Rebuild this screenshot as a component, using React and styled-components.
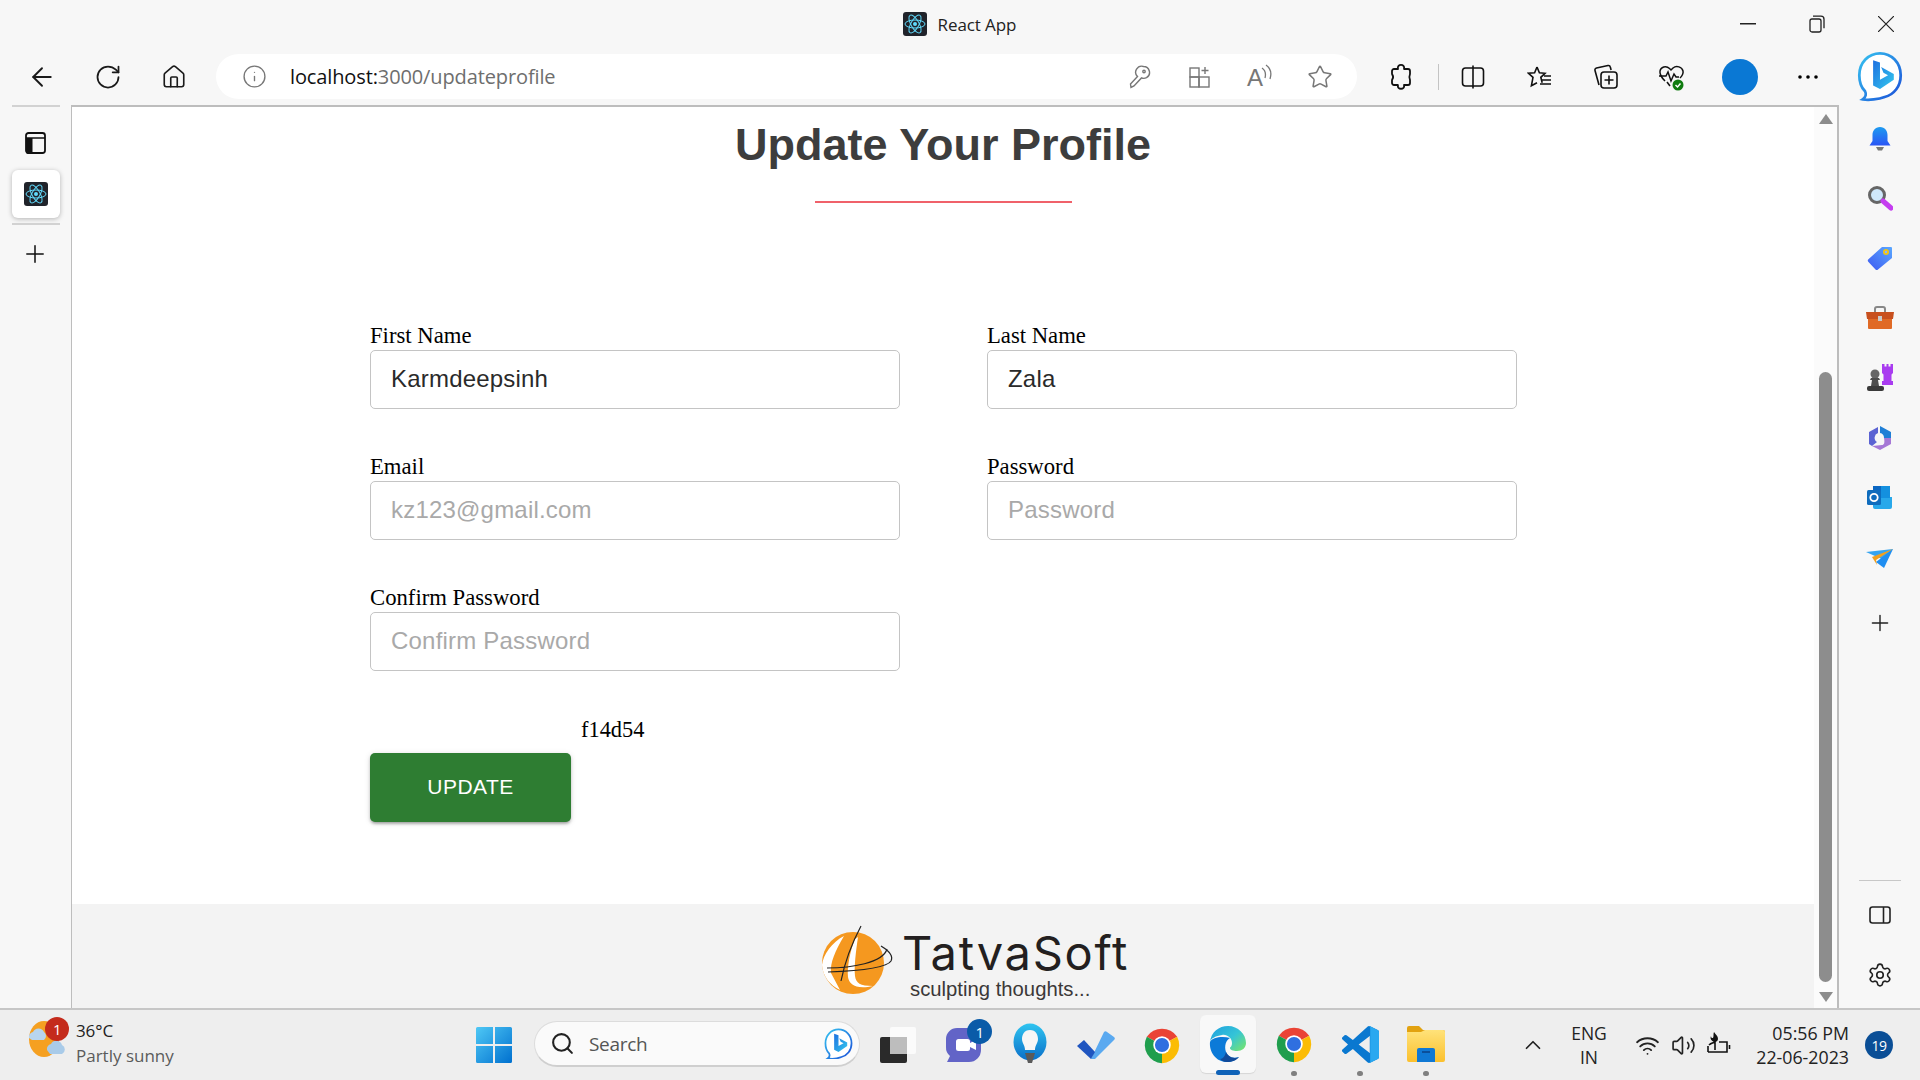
import React from "react";
import styled, { createGlobalStyle } from "styled-components";
import { ArrowLeft, RotateCw, Home, Info, Star, Plus, Settings, Search, ChevronUp, Wifi, Volume2 } from "lucide-react";

const Global = createGlobalStyle`
  html, body { margin: 0; padding: 0; width: 100%; height: 100%; overflow: hidden; }
  #root { width: 100%; height: 100%; }
  * { box-sizing: border-box; }
`;

const ui = `"Open Sans", "Noto Sans", sans-serif`;

const Shell = styled.div`
  width: 1920px; height: 1080px; display: flex; flex-direction: column;
  background: #f7f7f7; font-family: ${ui}; color: #111;
`;
const TitleBar = styled.header`
  height: 48px; flex: none; position: relative; display: flex; align-items: center; justify-content: center;
`;
const TitleCenter = styled.div`
  display: flex; align-items: center; gap: 11px; margin-left: -1px; font-size: 17px; color: #222; letter-spacing: -0.1px;
`;
const WindowControls = styled.div`
  position: absolute; right: 0; top: 0; height: 48px; display: flex; align-items: center;
`;
const WinBtn = styled.div`
  width: 69px; display: flex; justify-content: center; color: #222;
`;
const Toolbar = styled.div`
  height: 57px; flex: none; display: flex; align-items: center;
`;
const ToolBtn = styled.div`
  width: ${p => p.$w || 66}px; padding-left: ${p => p.$pad || 0}px; height: 46px; flex: none; display: flex; align-items: center; justify-content: center; color: #1a1a1a;
`;
const AddressBar = styled.div`
  width: 1141px; height: 45px; flex: none; margin-left: 9px; background: #fff; border-radius: 23px;
  display: flex; align-items: center; padding-left: 26px; color: #777;
`;
const Url = styled.div`
  margin-left: 23px; flex: 1; font-size: 20px; letter-spacing: -0.12px; color: #6e6e6e; white-space: nowrap;
  b { font-weight: 400; color: #111; }
`;
const AddrIcon = styled.div`
  width: 60px; display: flex; justify-content: center; flex: none; color: #777;
  &:last-child { margin-right: 7px; }
`;
const Separator = styled.div`
  width: 1px; height: 26px; margin-left: -7px; background: #c4c4c4; flex: none;
`;
const ProfileDot = styled.div`
  width: 36px; height: 36px; border-radius: 50%; background: #0a78d4;
`;
const Middle = styled.div`
  flex: 1; display: flex; min-height: 0;
`;
const LeftRail = styled.nav`
  width: 71px; flex: none; display: flex; flex-direction: column; align-items: flex-start; padding-left: 12px;
`;
const RailRule = styled.div`
  width: 48px; height: 2px; background: #d2d2d2; flex: none;
`;
const RailIcon = styled.div`
  width: 48px; height: ${p => p.$h || 58}px; padding: ${p => p.$pad || 0}px 2px 0 0; display: flex; align-items: center; justify-content: center; flex: none; color: #111;
`;
const ActiveTab = styled.div`
  width: 48px; height: 48px; margin: 0 0 5px; background: #fff; border-radius: 6px; flex: none;
  box-shadow: 0 1px 5px rgba(0,0,0,.28); display: flex; align-items: center; justify-content: center;
`;
const Viewport = styled.main`
  flex: 1; display: flex; min-width: 0; background: #fff;
  border-top: 2px solid #bdbdbd; border-left: 1px solid #bdbdbd; border-right: 2px solid #bdbdbd;
`;
const Page = styled.div`
  flex: 1; display: flex; flex-direction: column; min-width: 0; padding-top: 9px;
`;
const Heading = styled.h1`
  margin: 0; height: 56px; text-align: center; font: bold 45px/57px "Liberation Sans", Arial, sans-serif; color: #3d3d3d;
`;
const HeadingRule = styled.div`
  width: 257px; height: 2px; background: #f0616a; margin: 29px auto 0; flex: none;
`;
const Form = styled.form`
  margin: 120px 0 0 298px; width: 1147px; display: grid; grid-template-columns: 530px 530px; column-gap: 87px; row-gap: 45px;
`;
const Field = styled.div`
  display: flex; flex-direction: column;
`;
const FieldLabel = styled.label`
  height: 27px; font: 22.7px/25px "Liberation Serif", "Times New Roman", serif; color: #000; white-space: nowrap;
`;
const Input = styled.input`
  width: 530px; height: 59px; padding: 0 20px 2px 20px; border: 1px solid #c4c4c4; border-radius: 5px; background: #fff;
  font: 24px "Liberation Sans", Arial, sans-serif; letter-spacing: 0.2px; color: #2a2a2a; outline: none;
  &::placeholder { color: #a9a9a9; opacity: 1; }
`;
const Note = styled.div`
  margin: 45px 0 0 509px; height: 27px; font: 22.4px/27px "Liberation Serif", "Times New Roman", serif; color: #000;
`;
const UpdateButton = styled.button`
  display: block; margin: 10px 0 0 298px; width: 201px; height: 69px; padding: 0 0 2px; border: 0; border-radius: 5px; background: #2e7d32; color: #fff;
  font: 21px "Liberation Sans", Arial, sans-serif; letter-spacing: 0.45px;
  box-shadow: 0 3px 3px -2px rgba(0,0,0,.2), 0 2px 3px rgba(0,0,0,.18), 0 1px 6px rgba(0,0,0,.12);
`;
const Footer = styled.footer`
  margin-top: auto; height: 104px; flex: none; background: #f3f3f3; display: flex; align-items: flex-start; padding: 21px 0 0 748px;
`;
const LogoText = styled.div`
  margin-left: -6px; display: flex; flex-direction: column;
`;
const Brand = styled.div`
  font: 47px/52px Inter, "Liberation Sans", Arial, sans-serif; letter-spacing: 1.7px; color: #231f20; margin-top: 2px;
`;
const Tagline = styled.div`
  margin: -2px 0 0 8px; font: 20.3px/24px "Liberation Sans", Arial, sans-serif; color: #3b3838;
`;
const ScrollTrack = styled.div`
  width: 23px; flex: none; background: #fbfbfb; display: flex; flex-direction: column; align-items: center;
`;
const ArrowUp = styled.div`
  margin-top: 7px; width: 0; height: 0; border-left: 7px solid transparent; border-right: 7px solid transparent; border-bottom: 10px solid #8c8c8c; flex: none;
`;
const Thumb = styled.div`
  margin-top: 248px; width: 13px; height: 610px; border-radius: 7px; background: #8d8d8d; flex: none;
`;
const ArrowDown = styled.div`
  margin-top: 10px; width: 0; height: 0; border-left: 7px solid transparent; border-right: 7px solid transparent; border-top: 10px solid #8c8c8c; flex: none;
`;
const RightRail = styled.aside`
  width: 81px; flex: none; display: flex; flex-direction: column; align-items: center; padding: 5px 0 4px;
`;
const SideCell = styled.div`
  width: 60px; height: ${p => p.$h || 60}px; flex: none; display: flex; align-items: center; justify-content: center; color: #222;
`;
const SideRule = styled.div`
  margin: auto 0 3px; width: 42px; height: 1px; background: #c8c8c8; flex: none;
`;
const Taskbar = styled.footer`
  height: 72px; flex: none; display: flex; align-items: stretch; background: #eeeeee; border-top: 2px solid #c6c6c6;
`;
const Weather = styled.div`
  width: 461px; flex: none; position: relative; padding: 8px 0 0 76px; display: flex; flex-direction: column;
`;
const WeatherIconSlot = styled.div`
  position: absolute; left: 27px; top: 6px;
`;
const CountBadge = styled.div`
  position: absolute; left: ${p => p.$l}px; top: ${p => p.$t}px; width: ${p => p.$s || 24}px; height: ${p => p.$s || 24}px; border-radius: 50%;
  background: ${p => p.$bg}; color: #fff; font-size: ${p => p.$f || 15}px; display: flex; align-items: center; justify-content: center; letter-spacing: -0.5px;
`;
const Temp = styled.div`
  font-size: 17px; line-height: 26px; color: #222; letter-spacing: -0.1px;
`;
const Cond = styled.div`
  font-size: 17px; line-height: 24px; color: #5b5b5b; letter-spacing: 0;
`;
const TaskCell = styled.div`
  width: 66px; flex: none; position: relative; display: flex; align-items: center; justify-content: center;
`;
const ActiveTile = styled.div`
  position: absolute; left: 5px; top: 5px; width: 56px; height: 58px; border-radius: 6px; background: #f8f8f8; box-shadow: 0 1px 1px rgba(0,0,0,.1);
`;
const ActiveBar = styled.div`
  position: absolute; left: 21px; bottom: 5px; width: 24px; height: 5px; border-radius: 3px; background: #0f62b8;
`;
const RunDot = styled.div`
  position: absolute; left: 30px; bottom: 4px; width: 6px; height: 5px; border-radius: 3px; background: #7f7f7f;
`;
const TaskIconLayer = styled.div`
  position: relative; display: flex; margin-top: -2px;
`;
const SearchBox = styled.div`
  width: 326px; flex: none; height: 46px; margin: 11px 5px 0 7px; border-radius: 23px; background: #fafafa; border: 1px solid #dcdcdc; border-bottom: 2px solid #cfcfcf;
  display: flex; align-items: center; padding: 0 6px 0 15px; font-size: 19px; color: #555;
`;
const SearchLabel = styled.span`
  flex: 1; margin-left: 14px; letter-spacing: -0.3px;
`;
const Tray = styled.div`
  margin-left: auto; display: flex; align-items: center; height: 100%; color: #222;
`;
const TrayIcon = styled.div`
  width: ${p => p.$w || 36}px; display: flex; justify-content: center; flex: none;
`;
const Lang = styled.div`
  width: 64px; text-align: center; font-size: 17.5px; line-height: 24px; margin: 0 8px 0 6px;
`;
const Clock = styled.div`
  margin-left: 2px; width: 110px; text-align: right; font-size: 17.8px; line-height: 24px;
`;
const TrayBadge = styled.div`
  margin: 0 27px 0 16px; width: 28px; height: 28px; border-radius: 50%; background: #0a4e96; color: #fff; font-size: 14px; display: flex; align-items: center; justify-content: center; letter-spacing: -0.5px; flex: none;
`;

const ReactMark = ({ size = 24 }) => (
  <svg width={size} height={size} viewBox="0 0 24 24">
    <rect width="24" height="24" rx="3" fill="#20232a" />
    <g fill="none" stroke="#61dafb" strokeWidth="1">
      <ellipse cx="12" cy="12" rx="10" ry="4" />
      <ellipse cx="12" cy="12" rx="10" ry="4" transform="rotate(60 12 12)" />
      <ellipse cx="12" cy="12" rx="10" ry="4" transform="rotate(120 12 12)" />
    </g>
    <circle cx="12" cy="12" r="2" fill="#61dafb" />
  </svg>
);
const BingMark = ({ size = 50 }) => (
  <svg width={size} height={size * 1.1} viewBox="0 0 40 44">
    <defs>
      <linearGradient id={`bb${size}`} x1="0" y1="0" x2="1" y2="1"><stop offset="0" stopColor="#36c3f0" /><stop offset="1" stopColor="#1b4fd8" /></linearGradient>
      <linearGradient id={`bf${size}`} x1="0" y1="0" x2="1" y2="1"><stop offset="0" stopColor="#1c6fe0" /><stop offset="1" stopColor="#35c9ee" /></linearGradient>
    </defs>
    <path d="M20 2C30 2 38 10 38 21c0 10-6 17-14 19-5 2-14 3-19 2 3-2 3-5 2-7C3 31 2 26 2 21 2 10 10 2 20 2z" fill="#fff" stroke={`url(#bb${size})`} strokeWidth="2.4" />
    <path d="M14 8l6 2v15l7-4-4-2-2-5 11 6v5l-12 8-6-3z" fill={`url(#bf${size})`} />
  </svg>
);
const BookIcon = () => (
  <svg width="21" height="22" viewBox="0 0 21 22"><rect x="1" y="1" width="19" height="20" rx="2.500" fill="none" stroke="#111" strokeWidth="1.800" /><path d="M1 6h19" stroke="#111" strokeWidth="1.500" /><path d="M1 6h6.500v16H3.500A2.500 2.500 0 0 1 1 19.500z" fill="#111" /></svg>
);
const Restore = () => (
  <svg width="16" height="18" viewBox="0 0 16 18" fill="none" stroke="#222" strokeWidth="1.3"><rect x="1" y="4" width="11" height="13" rx="2" /><path d="M4 1.2h8a3 3 0 0 1 3 3v9" /></svg>
);
const Appgrid = () => (
  <svg width="24" height="24" viewBox="0 0 24 24" fill="none" stroke="#777" strokeWidth="1.4"><rect x="2" y="3" width="9" height="9" /><rect x="2" y="12" width="9" height="10" /><rect x="11" y="12" width="10" height="10" /><path d="M17 2v7M13.500 5.500h7" /></svg>
);
const KeyIcon = () => (
  <svg width="22" height="24" viewBox="0 0 22 24" fill="none" stroke="#777" strokeWidth="1.4"><path d="M14.500 1.500a6 6 0 0 1 3 11.200 6 6 0 0 1-5 .2L5 21l-3 1.500L1.500 19l7-7.500a6 6 0 0 1 6-10z" /><circle cx="15" cy="6.500" r="1.200" /></svg>
);
const ReadAloud = () => (
  <svg width="28" height="30" viewBox="0 0 28 30" fill="none" stroke="#777" strokeWidth="1.3">
    <text x="1" y="24" fontFamily="Liberation Sans, sans-serif" fontSize="24" fill="#777" stroke="none">A</text>
    <path d="M16 6c3 2 4 6 3 10M20 3c4 3 6 8 4 14" />
  </svg>
);
const ExtensionIcon = () => (
  <svg width="24" height="28" viewBox="0 0 24 28" fill="none" stroke="#111" strokeWidth="1.800" strokeLinejoin="round"><path d="M5 6h4c-1.500-5.500 7.500-5.500 6 0h4a2 2 0 0 1 2 2v3c-1 2.500-1 4 0 6v3a2 2 0 0 1-2 2h-4c1.500 5-7.500 5-6 0H5a2 2 0 0 1-2-2v-3c1.500-2 1.500-4 0-6V8a2 2 0 0 1 2-2z" /></svg>
);
const SplitIcon = () => (
  <svg width="24" height="24" viewBox="0 0 24 24" fill="none" stroke="#111" strokeWidth="1.6"><rect x="1.500" y="3" width="21" height="18" rx="3" /><path d="M12 0.500v23" /></svg>
);
const FavIcon = () => (
  <svg width="26" height="24" viewBox="0 0 26 24" fill="none" stroke="#111" strokeWidth="1.6"><path d="M10 2l2.400 5.800 5.600.5-4.200 4 1.400 5.500" /><path d="M10 2L7.600 7.800 1.500 8.300l4.500 4-1.600 8.500 5.600-3" /><path d="M17 11h7M15 15h9M13 19h11" /></svg>
);
const CollIcon = () => (
  <svg width="26" height="26" viewBox="0 0 26 26" fill="none" stroke="#111" strokeWidth="1.6"><path d="M6 21L2 6.500a2 2 0 0 1 1.500-2.500L15 1.500a2 2 0 0 1 2.300 1.500l.8 3" /><rect x="8" y="8" width="16" height="16" rx="3" fill="#f7f7f7" /><path d="M16 11.500v9M11.500 16h9" /></svg>
);
const HealthIcon = () => (
  <svg width="28" height="28" viewBox="0 0 28 28" fill="none"><path d="M7 18C3 14 1.500 11 2 8c.7-4 6-6 9.500-2.500L13 7l2-2c3.500-3 9-1 10 3 .5 2.500-1 5-3 7" stroke="#111" strokeWidth="1.5" /><path d="M1 13h7l2-4 3 9 3-7 2 3h3" stroke="#111" strokeWidth="1.5" /><path d="M9 19l3 4" stroke="#111" strokeWidth="1.5" /><circle cx="20" cy="22" r="5.500" fill="#107c10" /><path d="M17.500 22l2 2 3-3.500" stroke="#fff" strokeWidth="1.4" /></svg>
);
const Bell = () => (
  <svg width="24" height="26" viewBox="0 0 24 26"><defs><linearGradient id="bell" x1="0" y1="0" x2="0" y2="1"><stop offset="0" stopColor="#1d9bf0" /><stop offset="1" stopColor="#2a55f5" /></linearGradient></defs><path d="M12 1c5 0 7.500 4 7.500 8v6l3 4.500H1.500l3-4.500V9C4.500 5 7 1 12 1z" fill="url(#bell)" /><path d="M8 21h8l-2 3.500h-4z" fill="#777" /></svg>
);
const Magnifier = () => (
  <svg width="26" height="26" viewBox="0 0 26 26"><circle cx="10" cy="10" r="7.500" fill="#cfe8fb" stroke="#666" strokeWidth="3" /><path d="M16 16l8 7" stroke="#c53df0" strokeWidth="5" strokeLinecap="round" /></svg>
);
const Tag = () => (
  <svg width="26" height="26" viewBox="0 0 26 26"><defs><linearGradient id="tag" x1="0" y1="1" x2="1" y2="0"><stop offset="0" stopColor="#3d5af1" /><stop offset="1" stopColor="#5aa7ff" /></linearGradient></defs><path d="M15 2h9a1 1 0 0 1 1 1v10L11 24.500a2 2 0 0 1-2.500 0L1.500 17a2 2 0 0 1 .2-3z" fill="url(#tag)" /><circle cx="19" cy="7" r="3" fill="#f2c511" /><circle cx="19" cy="7" r="1.200" fill="#8ab4ff" /></svg>
);
const Toolbox = () => (
  <svg width="28" height="24" viewBox="0 0 28 24"><path d="M9 7V3a2 2 0 0 1 2-2h6a2 2 0 0 1 2 2v4" fill="none" stroke="#888" strokeWidth="2" /><path d="M0 6h28l-1 7H1z" fill="#c8501e" /><path d="M2 13h24v9a1 1 0 0 1-1 1H3a1 1 0 0 1-1-1z" fill="#e06a26" /><rect x="12" y="10" width="4" height="5" fill="#c9c9c9" /></svg>
);
const Chess = () => (
  <svg width="28" height="28" viewBox="0 0 28 28"><path d="M16 0h2.500v2.500h2V0h2v2.500h2V0H27v9l-1.500 1.500V17H27v4H16v-4h1.500v-6.500L16 9z" fill="#a93cf0" /><circle cx="9" cy="10" r="4.500" fill="#666" /><path d="M5 14h8l1 2h-2l1 6H5l1-6H4z" fill="#4d4d4d" /><rect x="1" y="22" width="17" height="5" rx="2" fill="#3a3a3a" /></svg>
);
const M365 = () => (
  <svg width="26" height="26" viewBox="0 0 26 26"><path d="M13 1l11 6v6h-7a5 5 0 0 0-4-5z" fill="#1f7fd6" /><path d="M24 13v6l-11 6-8-4 10-1c2 0 3-2 2-7z" fill="#a678d6" /><path d="M2 7l9-5v6a5 5 0 0 0-1 9l-5 4-3-2z" fill="#5b63d3" /></svg>
);
const Outlook = () => (
  <svg width="26" height="26" viewBox="0 0 26 26"><rect x="6" y="1" width="17" height="12" fill="#0a66c2" /><path d="M6 12h19v10a2 2 0 0 1-2 2H8a2 2 0 0 1-2-2z" fill="#28a8ea" /><path d="M14 1h9v12h-9z" fill="#1490df" /><rect x="0" y="5" width="14" height="15" rx="1.500" fill="#0f6cbd" /><circle cx="7" cy="12.500" r="3.700" fill="none" stroke="#fff" strokeWidth="1.800" /></svg>
);
const Plane = () => (
  <svg width="28" height="22" viewBox="0 0 28 22"><path d="M0 5l27-3-9 11z" fill="#35a4f0" /><path d="M6 10L27 2 10 13l1 5z" fill="#f2a01e" /><path d="M27 2l-9 19-8-6z" fill="#1f8ef1" /></svg>
);
const SidePanel = () => (
  <svg width="22" height="20" viewBox="0 0 22 20" fill="none" stroke="#222" strokeWidth="1.600"><rect x="1" y="2" width="20" height="16" rx="2.500" /><path d="M14.500 2v16" /></svg>
);
const WeatherIcon = () => (
  <svg width="40" height="44" viewBox="0 0 40 44"><ellipse cx="17" cy="23" rx="15" ry="18" fill="#f5a021" /><path d="M2 22a5 5 0 0 1 4-6 6 6 0 0 1 11 0 5 5 0 0 1 0 8H5z" fill="#b8d5ee" /><path d="M20 34a5 5 0 0 1 4-6 6 6 0 0 1 11 1 5 5 0 0 1 0 9H23z" fill="#a9cbe9" /></svg>
);
const WindowsLogo = () => (
  <svg width="36" height="36" viewBox="0 0 36 36"><defs><linearGradient id="w11" x1="0" y1="0" x2="1" y2="1"><stop offset="0" stopColor="#4fc8f5" /><stop offset="1" stopColor="#0070cf" /></linearGradient></defs><path d="M0 1.500A1.500 1.500 0 0 1 1.500 0H17v17H0zM19 0h15.500A1.500 1.500 0 0 1 36 1.500V17H19zM0 19h17v17H1.500A1.500 1.500 0 0 1 0 34.500zM19 19h17v15.500a1.500 1.500 0 0 1-1.500 1.500H19z" fill="url(#w11)" /></svg>
);
const TaskView = () => (
  <svg width="36" height="36" viewBox="0 0 36 36"><rect x="10" y="0" width="26" height="27" rx="2" fill="#fbfbfb" /><rect x="0" y="10" width="27" height="26" rx="2" fill="#2a2a2a" /><rect x="10" y="10" width="17" height="17" fill="#bdbdbd" /></svg>
);
const Teams = () => (
  <svg width="38" height="36" viewBox="0 0 38 36"><path d="M1 12a11 11 0 0 1 11-11h12a12 12 0 0 1 12 12v10a12 12 0 0 1-12 12H2l3-6a11 11 0 0 1-4-9z" fill="#6264c7" /><rect x="11" y="12" width="14" height="12" rx="2.500" fill="#fff" /><path d="M25 16l6-3v10l-6-3z" fill="#fff" /></svg>
);
const Tips = () => (
  <svg width="34" height="44" viewBox="0 0 34 44"><defs><linearGradient id="tip" x1="0" y1="0" x2="0" y2="1"><stop offset="0" stopColor="#2fc4f0" /><stop offset="1" stopColor="#0a6fc9" /></linearGradient></defs><ellipse cx="17" cy="19" rx="16.500" ry="18.500" fill="url(#tip)" /><path d="M17 7c6 0 8 5 8 9 0 4-3 6-3 11H12c0-5-3-7-3-11 0-4 2-9 8-9z" fill="#f6f6f6" /><path d="M12 30h10l-3 10h-4z" fill="#5a5a5a" /></svg>
);
const Todo = () => (
  <svg width="38" height="30" viewBox="0 0 38 30"><path d="M14 29L27 2a2 2 0 0 1 3 0l7 5a2 2 0 0 1 0 3L18 29z" fill="#5aa9f0" /><path d="M0 16l7-6 11 12-4 7z" fill="#1f55c0" /></svg>
);
const Chrome = () => (
  <svg width="40" height="40" viewBox="0 0 48 48">
    <path d="M24 24L5.800 14A22 22 0 0 1 42.200 14z" fill="#ea4335" />
    <path d="M24 24L42.200 14A22 22 0 0 1 24 46z" fill="#fbbc04" />
    <path d="M24 24L24 46A22 22 0 0 1 5.800 14z" fill="#1f9e4d" />
    <circle cx="24" cy="24" r="10.500" fill="#fff" /><circle cx="24" cy="24" r="8.500" fill="#2f6fe0" />
  </svg>
);
const Edge = () => (
  <svg width="38" height="38" viewBox="0 0 38 38">
    <defs><linearGradient id="edg" x1="0" y1="0" x2="1" y2=".8"><stop offset="0" stopColor="#1f9fe0" /><stop offset=".6" stopColor="#35c5d6" /><stop offset="1" stopColor="#6fe07a" /></linearGradient></defs>
    <path d="M1 17C2 7 10 1 19 1c10 0 18 8 18 17 0 5-4 8-9 8-4 0-7-1-7-3 0-1 2-1 2-5 0-5-5-9-10-8-6 1-11 3-12 7z" fill="url(#edg)" />
    <path d="M1 17c-1 10 6 20 17 20 5 0 9-2 12-5-6 2-11 0-13-5-2-6 0-12 4-14-7-2-18-1-20 4z" fill="#0c7ad8" />
    <path d="M17 27c3 6 9 7 13 5-2 3-7 5-12 5-3 0-5-1-7-3 3 0 5-3 6-7z" fill="#114a9a" />
  </svg>
);
const VSCode = () => (
  <svg width="37" height="37" viewBox="0 0 24 24">
    <path d="M23.150 2.587L18.210.21a1.494 1.494 0 0 0-1.705.29l-9.460 8.630-4.120-3.128a.999.999 0 0 0-1.276.057L.327 7.261A1 1 0 0 0 .326 8.740L3.899 12 .326 15.260a1 1 0 0 0 .001 1.479L1.650 17.940a.999.999 0 0 0 1.276.057l4.120-3.128 9.460 8.630a1.492 1.492 0 0 0 1.704.29l4.942-2.377A1.500 1.500 0 0 0 24 20.060V3.939a1.500 1.500 0 0 0-.850-1.352zm-5.146 14.861L10.826 12l7.178-5.448v10.896z" fill="#0a78d0" />
    <path d="M16.500.5a1.500 1.500 0 0 1 1.700-.3l4.950 2.380A1.500 1.500 0 0 1 24 3.940v16.120a1.500 1.500 0 0 1-.850 1.350l-4.950 2.380a1.500 1.500 0 0 1-1.700-.3c.6.6 1.800.2 1.800-.7V1.200c0-.9-1.200-1.300-1.800-.7z" fill="#2aa8f0" />
  </svg>
);
const Folder = () => (
  <svg width="38" height="36" viewBox="0 0 38 36"><defs><linearGradient id="fol" x1="0" y1="0" x2="0" y2="1"><stop offset="0" stopColor="#ffe27a" /><stop offset="1" stopColor="#fbc02d" /></linearGradient></defs><path d="M0 2a2 2 0 0 1 2-2h10l4 4h20a2 2 0 0 1 2 2v4H0z" fill="#e2a210" /><path d="M0 6h14l4-2h18a2 2 0 0 1 2 2v28a2 2 0 0 1-2 2H2a2 2 0 0 1-2-2z" fill="url(#fol)" /><path d="M10 24a2 2 0 0 1 2-2h14a2 2 0 0 1 2 2v12H10z" fill="#0f78d4" /><rect x="15" y="25" width="8" height="2" fill="#0b4f9a" /></svg>
);
const Battery = () => (
  <svg width="26" height="28" viewBox="0 0 26 28" fill="none" stroke="#111" strokeWidth="1.600"><path d="M2 21h19V11h-8" /><path d="M2 21v-6M23.500 14v4" /><path d="M8 1c2 3 4 4 4 7 0 2-2 3-3 3S3 9 5 5c0 2 1 2 2 2 1-2 0-4 1-6z" fill="#111" stroke="none" /><path d="M3 14c2-2 4-2 6-3v8" /></svg>
);
const TatvaLogo = () => (
  <svg width="88" height="72" viewBox="0 0 88 72">
    <circle cx="33" cy="38" r="31" fill="#f5981f" />
    <path d="M2 40C3 30 12 17 24 11 15 26 10 38 11 48l9 17C10 60 3 52 2 40z" fill="#fff" />
    <path d="M35 14c-5 12-8 28-7 38 1 7 8 13 25 9-13 0-17-3-18-10-1-10 1-25 3-39z" fill="#fff" />
    <path d="M41 1C32 18 25 36 21 56M7 43c24 0 56-5 60-19" stroke="#222" strokeWidth="1.200" fill="none" />
    <path d="M8 47c26-1 59-4 63-11 3-6-5-12-10-15" stroke="#222" strokeWidth="1.200" fill="none" />
  </svg>
);

const Labeled = ({ label, value, placeholder }) => (
  <Field>
    <FieldLabel>{label}</FieldLabel>
    <Input defaultValue={value} placeholder={placeholder} />
  </Field>
);

export default function App() {
  return (
    <Shell>
      <Global />
      <TitleBar>
        <TitleCenter><ReactMark size={24} /> React App</TitleCenter>
        <WindowControls>
          <WinBtn><svg width="16" height="2"><rect width="16" height="1.500" fill="#222" /></svg></WinBtn>
          <WinBtn><Restore /></WinBtn>
          <WinBtn><svg width="16" height="16" stroke="#222" strokeWidth="1.200"><path d="M0 0l16 16M16 0L0 16" /></svg></WinBtn>
        </WindowControls>
      </TitleBar>
      <Toolbar>
        <ToolBtn $w={75} $pad={9}><ArrowLeft size={30} strokeWidth={1.5} /></ToolBtn>
        <ToolBtn><RotateCw size={28} strokeWidth={1.5} /></ToolBtn>
        <ToolBtn><Home size={26} strokeWidth={1.5} /></ToolBtn>
        <AddressBar>
          <Info size={25} strokeWidth={1.3} />
          <Url><b>localhost:</b>3000/updateprofile</Url>
          <AddrIcon><KeyIcon /></AddrIcon>
          <AddrIcon><Appgrid /></AddrIcon>
          <AddrIcon><ReadAloud /></AddrIcon>
          <AddrIcon><Star size={26} strokeWidth={1.4} /></AddrIcon>
        </AddressBar>
        <ToolBtn $w={88}><ExtensionIcon /></ToolBtn>
        <Separator />
        <ToolBtn $w={68}><SplitIcon /></ToolBtn>
        <ToolBtn><FavIcon /></ToolBtn>
        <ToolBtn><CollIcon /></ToolBtn>
        <ToolBtn><HealthIcon /></ToolBtn>
        <ToolBtn $w={70}><ProfileDot /></ToolBtn>
        <ToolBtn $w={66}><svg width="20" height="4"><circle cx="2" cy="2" r="1.800" /><circle cx="10" cy="2" r="1.800" /><circle cx="18" cy="2" r="1.800" /></svg></ToolBtn>
        <ToolBtn $w={78}><BingMark size={46} /></ToolBtn>
      </Toolbar>
      <Middle>
        <LeftRail>
          <RailRule />
          <RailIcon $h={63} $pad={8}><BookIcon /></RailIcon>
          <ActiveTab><ReactMark size={24} /></ActiveTab>
          <RailRule />
          <RailIcon $h={58}><Plus size={28} strokeWidth={1.3} /></RailIcon>
        </LeftRail>
        <Viewport>
          <Page>
            <Heading>Update Your Profile</Heading>
            <HeadingRule />
            <Form>
              <Labeled label="First Name" value="Karmdeepsinh" />
              <Labeled label="Last Name" value="Zala" />
              <Labeled label="Email" placeholder="kz123@gmail.com" />
              <Labeled label="Password" placeholder="Password" />
              <Labeled label="Confirm Password" placeholder="Confirm Password" />
            </Form>
            <Note>f14d54</Note>
            <UpdateButton type="button">UPDATE</UpdateButton>
            <Footer>
              <TatvaLogo />
              <LogoText>
                <Brand>TatvaSoft</Brand>
                <Tagline>sculpting thoughts...</Tagline>
              </LogoText>
            </Footer>
          </Page>
          <ScrollTrack>
            <ArrowUp />
            <Thumb />
            <ArrowDown />
          </ScrollTrack>
        </Viewport>
        <RightRail>
          <SideCell $h={58}><Bell /></SideCell>
          <SideCell><Magnifier /></SideCell>
          <SideCell><Tag /></SideCell>
          <SideCell><Toolbox /></SideCell>
          <SideCell><Chess /></SideCell>
          <SideCell><M365 /></SideCell>
          <SideCell><Outlook /></SideCell>
          <SideCell><Plane /></SideCell>
          <SideCell $h={70}><Plus size={26} strokeWidth={1.3} /></SideCell>
          <SideRule />
          <SideCell $h={62}><SidePanel /></SideCell>
          <SideCell $h={58}><Settings size={26} strokeWidth={1.5} /></SideCell>
        </RightRail>
      </Middle>
      <Taskbar>
        <Weather>
          <WeatherIconSlot><WeatherIcon /></WeatherIconSlot>
          <CountBadge $l={45} $t={7} $bg="#c42b1c">1</CountBadge>
          <Temp>36°C</Temp>
          <Cond>Partly sunny</Cond>
        </Weather>
        <TaskCell><WindowsLogo /></TaskCell>
        <SearchBox>
          <Search size={25} strokeWidth={2} color="#222" />
          <SearchLabel>Search</SearchLabel>
          <BingMark size={29} />
        </SearchBox>
        <TaskCell><TaskView /></TaskCell>
        <TaskCell><Teams /><CountBadge $l={36} $t={9} $s={25} $bg="#0a5ba8">1</CountBadge></TaskCell>
        <TaskCell><Tips /></TaskCell>
        <TaskCell><Todo /></TaskCell>
        <TaskCell><Chrome /></TaskCell>
        <TaskCell><ActiveTile /><TaskIconLayer><Edge /></TaskIconLayer><ActiveBar /></TaskCell>
        <TaskCell><TaskIconLayer><Chrome /></TaskIconLayer><RunDot /></TaskCell>
        <TaskCell><TaskIconLayer><VSCode /></TaskIconLayer><RunDot /></TaskCell>
        <TaskCell><TaskIconLayer><Folder /></TaskIconLayer><RunDot /></TaskCell>
        <Tray>
          <TrayIcon><ChevronUp size={26} strokeWidth={1.6} /></TrayIcon>
          <Lang>ENG<br />IN</Lang>
          <TrayIcon><Wifi size={25} strokeWidth={1.8} /></TrayIcon>
          <TrayIcon><Volume2 size={25} strokeWidth={1.6} /></TrayIcon>
          <TrayIcon><Battery /></TrayIcon>
          <Clock>05:56 PM<br />22-06-2023</Clock>
          <TrayBadge>19</TrayBadge>
        </Tray>
      </Taskbar>
    </Shell>
  );
}
